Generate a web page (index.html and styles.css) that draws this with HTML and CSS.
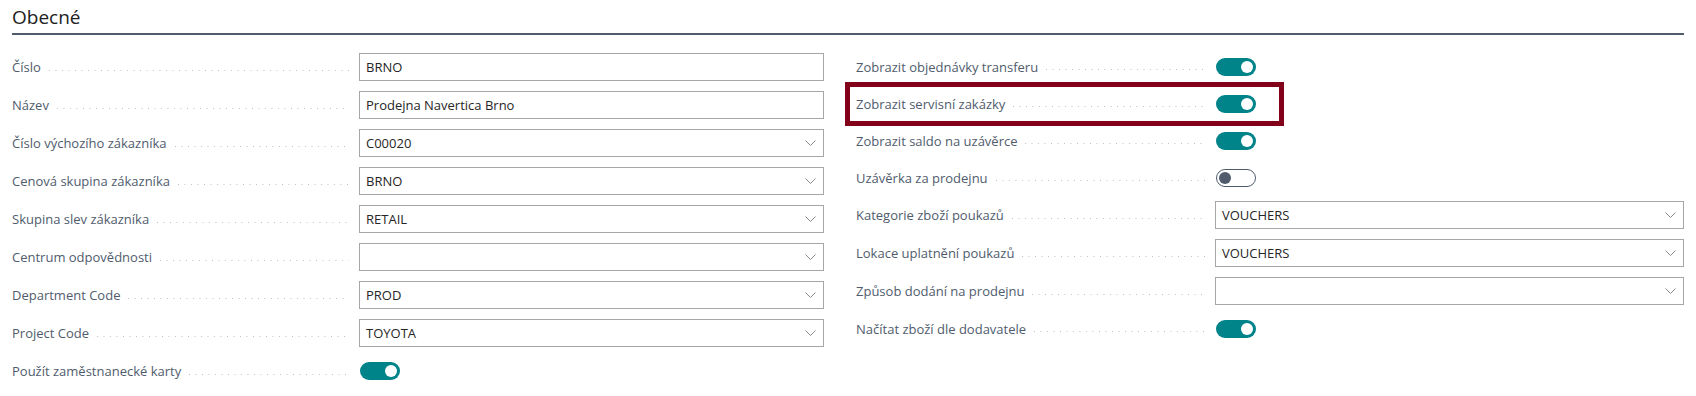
FILE: index.html
```html
<!DOCTYPE html>
<html lang="cs">
<head>
<meta charset="utf-8">
<title>Obecné</title>
<link rel="stylesheet" href="styles.css">
</head>
<body>
<div class="page">
  <div class="caption">Obecné</div>
  <div class="groups">
    <div class="col col-left">
      <div class="row"><div class="label"><span>Číslo</span><i class="lead"></i></div><div class="input"><span>BRNO</span></div></div>
      <div class="row"><div class="label"><span>Název</span><i class="lead"></i></div><div class="input"><span>Prodejna Navertica Brno</span></div></div>
      <div class="row"><div class="label"><span>Číslo výchozího zákazníka</span><i class="lead"></i></div><div class="input"><span>C00020</span><svg class="chev" width="11" height="6" viewBox="0 0 11 6"><polyline points="0.5,0.5 5.5,5.5 10.5,0.5"/></svg></div></div>
      <div class="row"><div class="label"><span>Cenová skupina zákazníka</span><i class="lead"></i></div><div class="input"><span>BRNO</span><svg class="chev" width="11" height="6" viewBox="0 0 11 6"><polyline points="0.5,0.5 5.5,5.5 10.5,0.5"/></svg></div></div>
      <div class="row"><div class="label"><span>Skupina slev zákazníka</span><i class="lead"></i></div><div class="input"><span>RETAIL</span><svg class="chev" width="11" height="6" viewBox="0 0 11 6"><polyline points="0.5,0.5 5.5,5.5 10.5,0.5"/></svg></div></div>
      <div class="row"><div class="label"><span>Centrum odpovědnosti</span><i class="lead"></i></div><div class="input"><span></span><svg class="chev" width="11" height="6" viewBox="0 0 11 6"><polyline points="0.5,0.5 5.5,5.5 10.5,0.5"/></svg></div></div>
      <div class="row"><div class="label"><span>Department Code</span><i class="lead"></i></div><div class="input"><span>PROD</span><svg class="chev" width="11" height="6" viewBox="0 0 11 6"><polyline points="0.5,0.5 5.5,5.5 10.5,0.5"/></svg></div></div>
      <div class="row"><div class="label"><span>Project Code</span><i class="lead"></i></div><div class="input"><span>TOYOTA</span><svg class="chev" width="11" height="6" viewBox="0 0 11 6"><polyline points="0.5,0.5 5.5,5.5 10.5,0.5"/></svg></div></div>
      <div class="row"><div class="label"><span>Použít zaměstnanecké karty</span><i class="lead"></i></div><div class="ctl"><span class="toggle on"><b></b></span></div></div>
    </div>
    <div class="col col-right">
      <div class="row trow"><div class="label"><span>Zobrazit objednávky transferu</span><i class="lead"></i></div><div class="ctl"><span class="toggle on"><b></b></span></div></div>
      <div class="row trow"><div class="label"><span>Zobrazit servisní zakázky</span><i class="lead"></i></div><div class="ctl"><span class="toggle on"><b></b></span></div></div>
      <div class="row trow"><div class="label"><span>Zobrazit saldo na uzávěrce</span><i class="lead"></i></div><div class="ctl"><span class="toggle on"><b></b></span></div></div>
      <div class="row trow"><div class="label"><span>Uzávěrka za prodejnu</span><i class="lead"></i></div><div class="ctl"><span class="toggle off"><b></b></span></div></div>
      <div class="row"><div class="label"><span>Kategorie zboží poukazů</span><i class="lead"></i></div><div class="input"><span>VOUCHERS</span><svg class="chev" width="11" height="6" viewBox="0 0 11 6"><polyline points="0.5,0.5 5.5,5.5 10.5,0.5"/></svg></div></div>
      <div class="row"><div class="label"><span>Lokace uplatnění poukazů</span><i class="lead"></i></div><div class="input"><span>VOUCHERS</span><svg class="chev" width="11" height="6" viewBox="0 0 11 6"><polyline points="0.5,0.5 5.5,5.5 10.5,0.5"/></svg></div></div>
      <div class="row"><div class="label"><span>Způsob dodání na prodejnu</span><i class="lead"></i></div><div class="input"><span></span><svg class="chev" width="11" height="6" viewBox="0 0 11 6"><polyline points="0.5,0.5 5.5,5.5 10.5,0.5"/></svg></div></div>
      <div class="row trow"><div class="label"><span>Načítat zboží dle dodavatele</span><i class="lead"></i></div><div class="ctl"><span class="toggle on"><b></b></span></div></div>
    </div>
  </div>
  <div class="highlight"></div>
</div>
</body>
</html>
```

FILE: styles.css
```css
html, body {
  margin: 0;
  padding: 0;
  background: #ffffff;
}

body {
  font-family: "Open Sans", "Noto Sans", sans-serif;
  color: #212121;
  width: 1696px;
  height: 396px;
  overflow: hidden;
}

.page {
  position: relative;
  padding: 0 12px;
}

.caption {
  font-size: 19px;
  line-height: 24px;
  padding: 5px 0 4px;
  border-bottom: 2px solid #505c6d;
  color: #212121;
}

.groups {
  display: grid;
  grid-template-columns: 812px 828px;
  column-gap: 32px;
  padding-top: 13px;
}

.row {
  display: grid;
  grid-template-columns: 347px 1fr;
  align-items: center;
  height: 38px;
}

.col-right .row {
  grid-template-columns: 359px 1fr;
}

.col-right .trow {
  height: 37px;
}

.label {
  display: flex;
  align-items: center;
  font-size: 13px;
  line-height: 18px;
  color: #505c6d;
  white-space: nowrap;
  min-width: 0;
}

.lead {
  flex: 1;
  height: 1px;
  margin: 6px 10px 0 8px;
  background-image: linear-gradient(to right, #bdbdbd 1px, transparent 1px);
  background-size: 6.5px 1px;
  background-repeat: repeat-x;
}

.input {
  box-sizing: border-box;
  height: 28px;
  border: 1px solid #a6a6a6;
  background: #ffffff;
  display: flex;
  align-items: center;
  justify-content: space-between;
  padding: 0 7px 0 6px;
  font-size: 13px;
  line-height: 26px;
  color: #262626;
}

.chev {
  flex: none;
  fill: none;
  stroke: #8a8a8a;
  stroke-width: 1;
}

.ctl {
  display: flex;
  align-items: center;
  padding-left: 1px;
}

.toggle {
  box-sizing: border-box;
  width: 40px;
  height: 18px;
  border-radius: 9px;
  display: flex;
  align-items: center;
}

.toggle b {
  display: block;
  width: 12px;
  height: 12px;
  border-radius: 50%;
}

.toggle.on {
  background: #008489;
  justify-content: flex-end;
  padding-right: 3px;
}

.toggle.on b {
  background: #ffffff;
}

.toggle.off {
  background: #ffffff;
  border: 1px solid #505c6d;
  justify-content: flex-start;
  padding-left: 2px;
}

.toggle.off b {
  background: #505c6d;
}

.highlight {
  position: absolute;
  left: 845px;
  top: 82px;
  width: 439px;
  height: 44px;
  box-sizing: border-box;
  border: 5px solid #820019;
  pointer-events: none;
}
```
